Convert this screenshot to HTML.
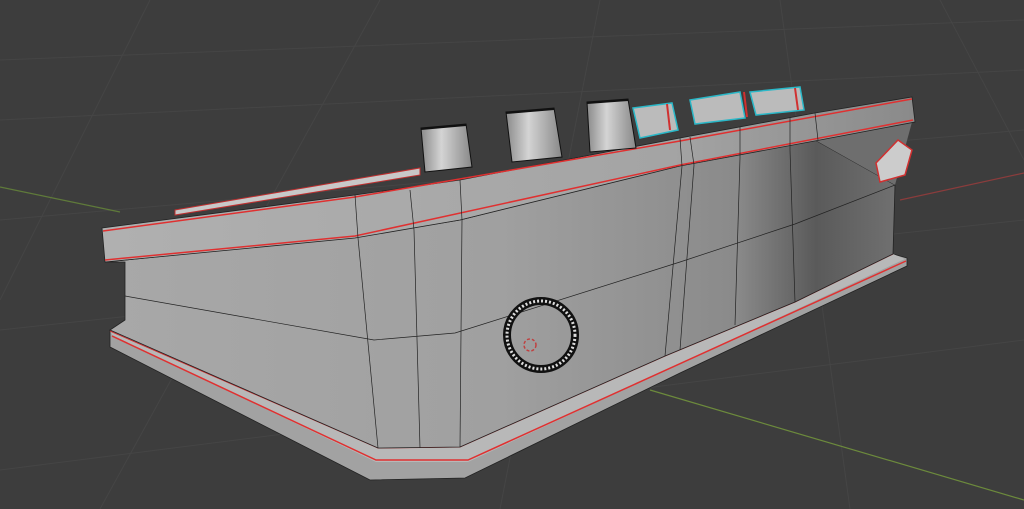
<!DOCTYPE html>
<html><head><style>html,body{margin:0;padding:0;background:#3d3d3d;overflow:hidden}svg{display:block}</style></head>
<body>
<svg width="1024" height="509" viewBox="0 0 1024 509" xmlns="http://www.w3.org/2000/svg">
<defs>
<linearGradient id="body" x1="0" x2="1" y1="0" y2="0">
<stop offset="0" stop-color="#a8a8a8"/><stop offset="0.5" stop-color="#a0a0a0"/><stop offset="0.8" stop-color="#8a8a8a"/><stop offset="0.9" stop-color="#5a5a5a"/><stop offset="1" stop-color="#707070"/>
</linearGradient>
<linearGradient id="lid" x1="0" x2="1"><stop offset="0" stop-color="#b0b0b0"/><stop offset="0.7" stop-color="#a4a4a4"/><stop offset="1" stop-color="#8a8a8a"/></linearGradient>
<linearGradient id="knob" x1="0" x2="1"><stop offset="0" stop-color="#8a8a8a"/><stop offset="0.4" stop-color="#d4d4d4"/><stop offset="1" stop-color="#888"/></linearGradient>
</defs>
<g stroke="#454545" stroke-width="1">
<path d="M0 60 L1024 20 M0 120 L1024 70 M0 220 L1024 130 M0 330 L1024 220 M0 470 L1024 340 M150 0 L0 300 M380 0 L100 509 M600 0 L500 509 M780 0 L850 509 M940 0 L1024 160"/>
</g>
<path d="M0 187 L120 212" stroke="#5f7a3a" stroke-width="1.2"/>
<path d="M650 390 L1024 500" stroke="#6c8a3c" stroke-width="1.2"/>
<path d="M900 200 L1024 173" stroke="#8a3c3c" stroke-width="1.2"/>
<!-- base plinth -->
<polygon points="110,330 378,448 460,447 665,356 795,302 893,254 907,258 907,266 680,373 465,478 370,480 110,347" fill="#a2a2a2" stroke="#222" stroke-width="0.8"/>
<polygon points="110,330 378,448 460,447 665,356 795,302 893,254 905,259 468,462 376,462 112,335" fill="#b8b8b8"/>
<polyline points="112,336 376,460 468,460 906,261" fill="none" stroke="#e03030" stroke-width="1.5"/>
<polyline points="110,331 378,448 460,447 665,356 795,302 893,254" fill="none" stroke="#d03030" stroke-width="1"/>
<!-- main body -->
<polygon points="105,262 355,237 460,220 680,165 815,140 895,185 893,254 795,302 665,356 460,447 378,448 110,330 125,320 125,262" fill="url(#body)" stroke="#222" stroke-width="0.8"/>
<polygon points="815,140 912,122 895,185" fill="#6e6e6e"/>
<!-- lid -->
<polygon points="102,228 355,195 460,180 680,138 815,113 912,97 915,122 820,140 680,166 460,220 355,238 105,262" fill="url(#lid)" stroke="#222" stroke-width="0.8"/>
<polyline points="103,231 355,197 680,141 912,99" fill="none" stroke="#e03030" stroke-width="1.5"/>
<polyline points="105,260 355,236 680,165 913,120" fill="none" stroke="#e03030" stroke-width="1.5"/>
<g stroke="#222" stroke-width="0.7" fill="none">
<path d="M355,195 L358,238 L378,448 M410,190 L414,230 L420,448 M460,180 L462,220 L460,447 M680,138 L682,166 L665,356 M690,137 L694,165 L680,350 M740,127 L740,158 L735,325 M790,118 L790,150 L795,302 M125,296 L374,340 L455,333 L680,262 L795,224 L895,185 M815,113 L818,140"/>
</g>
<!-- top strip details -->
<polygon points="175,210 420,168 420,175 175,215" fill="#c8c8c8" stroke="#c03030" stroke-width="1"/>
<!-- knobs -->
<polygon points="421,128 466,124 472,167 425,172" fill="url(#knob)" stroke="#111" stroke-width="1"/>
<polygon points="506,112 554,108 562,157 512,162" fill="url(#knob)" stroke="#111" stroke-width="1"/>
<polygon points="587,102 628,99 636,148 590,152" fill="url(#knob)" stroke="#111" stroke-width="1"/>
<g fill="none" stroke="#111" stroke-width="2"><path d="M421,129 L466,125 M506,113 L554,109 M587,103 L628,100"/></g>
<!-- cyan things -->
<g fill="#bbb" stroke="#2ab8c8" stroke-width="1.5">
<polygon points="633,108 672,103 678,130 640,138"/>
<polygon points="690,100 740,92 745,118 695,124"/>
<polygon points="750,92 800,87 804,110 756,115"/>
</g>
<g stroke="#d03030" stroke-width="2"><path d="M667,104 L670,130 M744,92 L747,117 M795,88 L798,110"/></g>
<!-- right handle -->
<polygon points="876,163 898,140 912,150 905,175 880,182" fill="#ccc" stroke="#d03030" stroke-width="1.5"/>
<!-- ring -->
<circle cx="541" cy="335" r="34" fill="none" stroke="#111" stroke-width="8"/>
<circle cx="541" cy="335" r="34" fill="none" stroke="#ddd" stroke-width="3" stroke-dasharray="2 2"/>
<circle cx="530" cy="345" r="6" fill="none" stroke="#c04040" stroke-width="1.5" stroke-dasharray="3 2"/>
</svg>
</body></html>
